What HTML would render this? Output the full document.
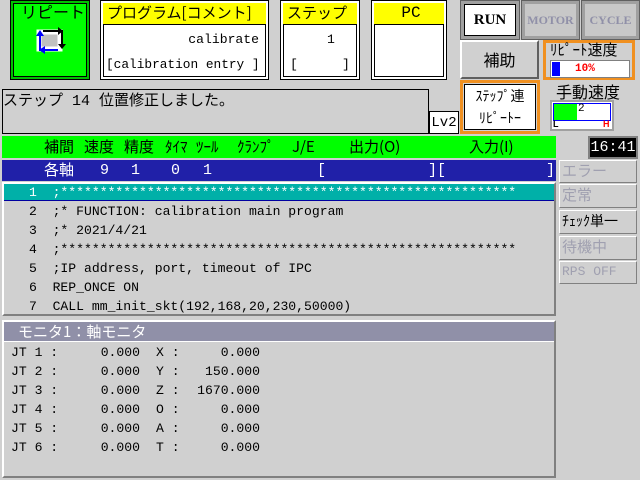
<!DOCTYPE html>
<html><head><meta charset="utf-8"><style>
*{margin:0;padding:0;box-sizing:border-box}
body{width:640px;height:480px;background:#d0d0d0;position:relative;overflow:hidden;font-family:"Liberation Mono","Noto Sans CJK JP",monospace;color:#000}
.a{position:absolute}
.frame{border:1px solid #000;background:#fff;box-shadow:inset 0 0 0 2px #fff,inset 0 0 0 3px #000}
.yel{background:#ffff00;border-bottom:1px solid #000;font-size:16px;line-height:20px;padding-left:4px}
.t{font-size:13.1px;white-space:pre;line-height:19px}
.h{position:absolute;top:136px;font:15px 'Noto Sans CJK JP',sans-serif;line-height:22px;white-space:pre}
.b{position:absolute;top:161px;color:#fff;font-size:15px;line-height:19px;white-space:pre}
.sb{border:1px solid;border-color:#fff #808080 #808080 #fff;background:#d0d0d0;font-size:15px;color:#a0a0b0;line-height:20px;padding-left:2px;font-family:"Noto Sans CJK JP",sans-serif}
</style></head><body>
<div class="a" style="left:10px;top:0;width:80px;height:80px;background:#00ff00;border:1px solid #000;box-shadow:inset 0 0 0 2px #00c000,inset 0 0 0 3px #000"></div>
<div class="a t" style="left:21px;top:2px;font-size:16px;font-family:'Noto Sans CJK JP',sans-serif">リピート</div>
<svg class="a" style="left:34px;top:27px" width="32" height="28" viewBox="0 0 32 28"><rect x="5" y="5" width="21" height="17" fill="#c0c0c0" stroke="#fff" stroke-width="5"/><path d="M9 4H28V19" stroke="#000" stroke-width="2" fill="none"/><path d="M24 0L29 4L24 8Z" fill="#000"/><path d="M24 17L28 22L32 17Z" fill="#000"/><path d="M24 23H6V7" stroke="#0000ff" stroke-width="2" fill="none"/><path d="M2 9L6 3L10 9Z M11 19L5 23L11 27Z" fill="#0000ff"/></svg>
<div class="a frame" style="left:100px;top:0;width:169px;height:80px"></div>
<div class="a yel" style="left:103px;top:3px;width:163px;height:22px;font-family:'Noto Sans CJK JP',sans-serif;font-size:15px">プログラム[コメント]</div>
<div class="a t" style="left:160px;top:30px;width:99px;text-align:right">calibrate</div>
<div class="a t" style="left:106px;top:55px;font-size:12.8px">[calibration entry ]</div>
<div class="a frame" style="left:280px;top:0;width:80px;height:80px"></div>
<div class="a yel" style="left:283px;top:3px;width:74px;height:22px;font-family:'Noto Sans CJK JP',sans-serif;font-size:15px">ステップ</div>
<div class="a t" style="left:327px;top:30px">1</div>
<div class="a t" style="left:290px;top:55px">[</div>
<div class="a t" style="left:342px;top:55px">]</div>
<div class="a frame" style="left:371px;top:0;width:76px;height:80px"></div>
<div class="a yel" style="left:374px;top:3px;width:70px;height:22px;text-align:center">PC</div>
<div class="a" style="left:460px;top:0;width:60px;height:40px;background:#a0a0a0;border:1px solid #606060"></div>
<div class="a" style="left:464px;top:4px;width:52px;height:32px;background:#fff;border:1px solid #000;font:bold 15px 'Liberation Serif',serif;text-align:center;line-height:30px">RUN</div>
<div class="a" style="left:521px;top:0;width:59px;height:40px;background:#a0a0a0;border:1px solid #606060"></div>
<div class="a" style="left:525px;top:4px;width:51px;height:32px;background:#c8c8c8;color:#9090a8;font:bold 12px 'Liberation Serif',serif;text-align:center;line-height:32px">MOTOR</div>
<div class="a" style="left:581px;top:0;width:59px;height:40px;background:#a0a0a0;border:1px solid #606060"></div>
<div class="a" style="left:585px;top:4px;width:51px;height:32px;background:#c8c8c8;color:#9090a8;font:bold 12px 'Liberation Serif',serif;text-align:center;line-height:32px">CYCLE</div>
<div class="a" style="left:460px;top:40px;width:79px;height:39px;border:2px solid;border-color:#fff #606060 #606060 #fff;font:16px 'Noto Sans CJK JP',sans-serif;text-align:center;line-height:35px">補助</div>
<div class="a" style="left:460px;top:80px;width:80px;height:54px;border:3px solid #f09020;background:#d0d0d0"></div>
<div class="a" style="left:464px;top:84px;width:72px;height:46px;background:#fff;border:1px solid #000;font:14px 'Noto Sans CJK JP',sans-serif;text-align:center;line-height:22px">ｽﾃｯﾌﾟ連<br>ﾘﾋﾟｰﾄｰ</div>
<div class="a" style="left:543px;top:40px;width:92px;height:40px;border:3px solid #f09020"></div>
<div class="a" style="left:550px;top:40px;font:15px 'Noto Sans CJK JP',sans-serif;line-height:20px">ﾘﾋﾟｰﾄ速度</div>
<div class="a" style="left:550px;top:60px;width:80px;height:18px;background:#fff;border:1px solid #808080"></div>
<div class="a" style="left:552px;top:62px;width:8px;height:14px;background:#0000ff"></div>
<div class="a" style="left:575px;top:61px;color:#f00;font:bold 11px 'Liberation Mono',monospace;line-height:16px">10%</div>
<div class="a" style="left:556px;top:81px;font:16px 'Noto Sans CJK JP',sans-serif;line-height:20px">手動速度</div>
<div class="a" style="left:550px;top:100px;width:64px;height:31px;background:#fff;border:2px solid #a0a0a0"></div>
<div class="a" style="left:553px;top:103px;width:58px;height:18px;border:1px solid #0000ff"></div>
<div class="a" style="left:554px;top:104px;width:23px;height:16px;background:#00ff00"></div>
<div class="a" style="left:578px;top:103px;font:11px 'Liberation Mono',monospace">2</div>
<div class="a" style="left:553px;top:119px;font:bold 9px 'Liberation Sans',sans-serif">L</div>
<div class="a" style="left:603px;top:119px;font:bold 9px 'Liberation Sans',sans-serif;color:#f00">H</div>
<div class="a" style="left:2px;top:89px;width:427px;height:45px;border:1px solid #000;background:#d0d0d0"></div>
<div class="a t" style="left:3px;top:92px;font-size:15px">ステップ 14 位置修正しました。</div>
<div class="a" style="left:429px;top:111px;width:30px;height:23px;background:#fff;border:1px solid #000;font:14px 'Liberation Mono',monospace;line-height:22px;text-align:center">Lv2</div>
<div class="a" style="left:2px;top:136px;width:554px;height:22px;background:#00ff00"></div>
<div class="h" style="left:44px">補間</div><div class="h" style="left:84px">速度</div><div class="h" style="left:124px">精度</div>
<div class="h" style="left:165px">ﾀｲﾏ</div><div class="h" style="left:196px">ﾂｰﾙ</div><div class="h" style="left:237px">ｸﾗﾝﾌﾟ</div>
<div class="h" style="left:292px">J/E</div><div class="h" style="left:349px">出力(O)</div><div class="h" style="left:469px">入力(I)</div>
<div class="a" style="left:2px;top:160px;width:554px;height:21px;background:#2020a8"></div>
<div class="b" style="left:44px;font-family:'Noto Sans CJK JP',sans-serif;top:160px">各軸</div>
<div class="b" style="left:100px">9</div><div class="b" style="left:131px">1</div><div class="b" style="left:171px">0</div><div class="b" style="left:203px">1</div>
<div class="b" style="left:317px">[</div><div class="b" style="left:428px">][</div><div class="b" style="left:546px">]</div>
<div class="a" style="left:2px;top:182px;width:554px;height:134px;border:2px solid;border-color:#fff #808080 #808080 #fff"></div>
<div class="a" style="left:4px;top:184px;width:550px;height:17px;background:#00b0a8;border-bottom:1px solid #0000a0"></div>
<div class="a t" style="left:29px;top:183px;color:#fff">1  ;**********************************************************</div>
<div class="a t" style="left:29px;top:202px">2  ;* FUNCTION: calibration main program
3  ;* 2021/4/21
4  ;**********************************************************
5  ;IP address, port, timeout of IPC
6  REP_ONCE ON
7  CALL mm_init_skt(192,168,20,230,50000)</div>
<div class="a" style="left:2px;top:320px;width:554px;height:158px;border:2px solid;border-color:#fff #808080 #808080 #fff"></div>
<div class="a" style="left:4px;top:322px;width:550px;height:20px;background:#9090a8;border-bottom:1px solid #fff;color:#fff;font:15px 'Noto Sans CJK JP',sans-serif;line-height:19px;padding-left:14px">モニタ1：軸モニタ</div>
<div class="a t" style="left:11px;top:343px">JT 1 :
JT 2 :
JT 3 :
JT 4 :
JT 5 :
JT 6 :</div>
<div class="a t" style="left:90px;top:343px;width:50px;text-align:right">0.000
0.000
0.000
0.000
0.000
0.000</div>
<div class="a t" style="left:156px;top:343px">X :
Y :
Z :
O :
A :
T :</div>
<div class="a t" style="left:190px;top:343px;width:70px;text-align:right">0.000
150.000
1670.000
0.000
0.000
0.000</div>
<div class="a" style="left:588px;top:136px;width:50px;height:23px;background:#000;border:2px solid #808080;color:#fff;font:15px 'Liberation Mono',monospace;text-align:center;line-height:19px">16:41</div>
<div class="a sb" style="left:559px;top:160px;width:78px;height:23px">エラー</div>
<div class="a sb" style="left:559px;top:184px;width:78px;height:24px">定常</div>
<div class="a sb" style="left:559px;top:210px;width:78px;height:24px;color:#000;font-size:14px">ﾁｪｯｸ単一</div>
<div class="a sb" style="left:559px;top:236px;width:78px;height:24px">待機中</div>
<div class="a sb" style="left:559px;top:261px;width:78px;height:23px;font-family:'Liberation Mono',monospace;font-size:13px">RPS OFF</div>
</body></html>
